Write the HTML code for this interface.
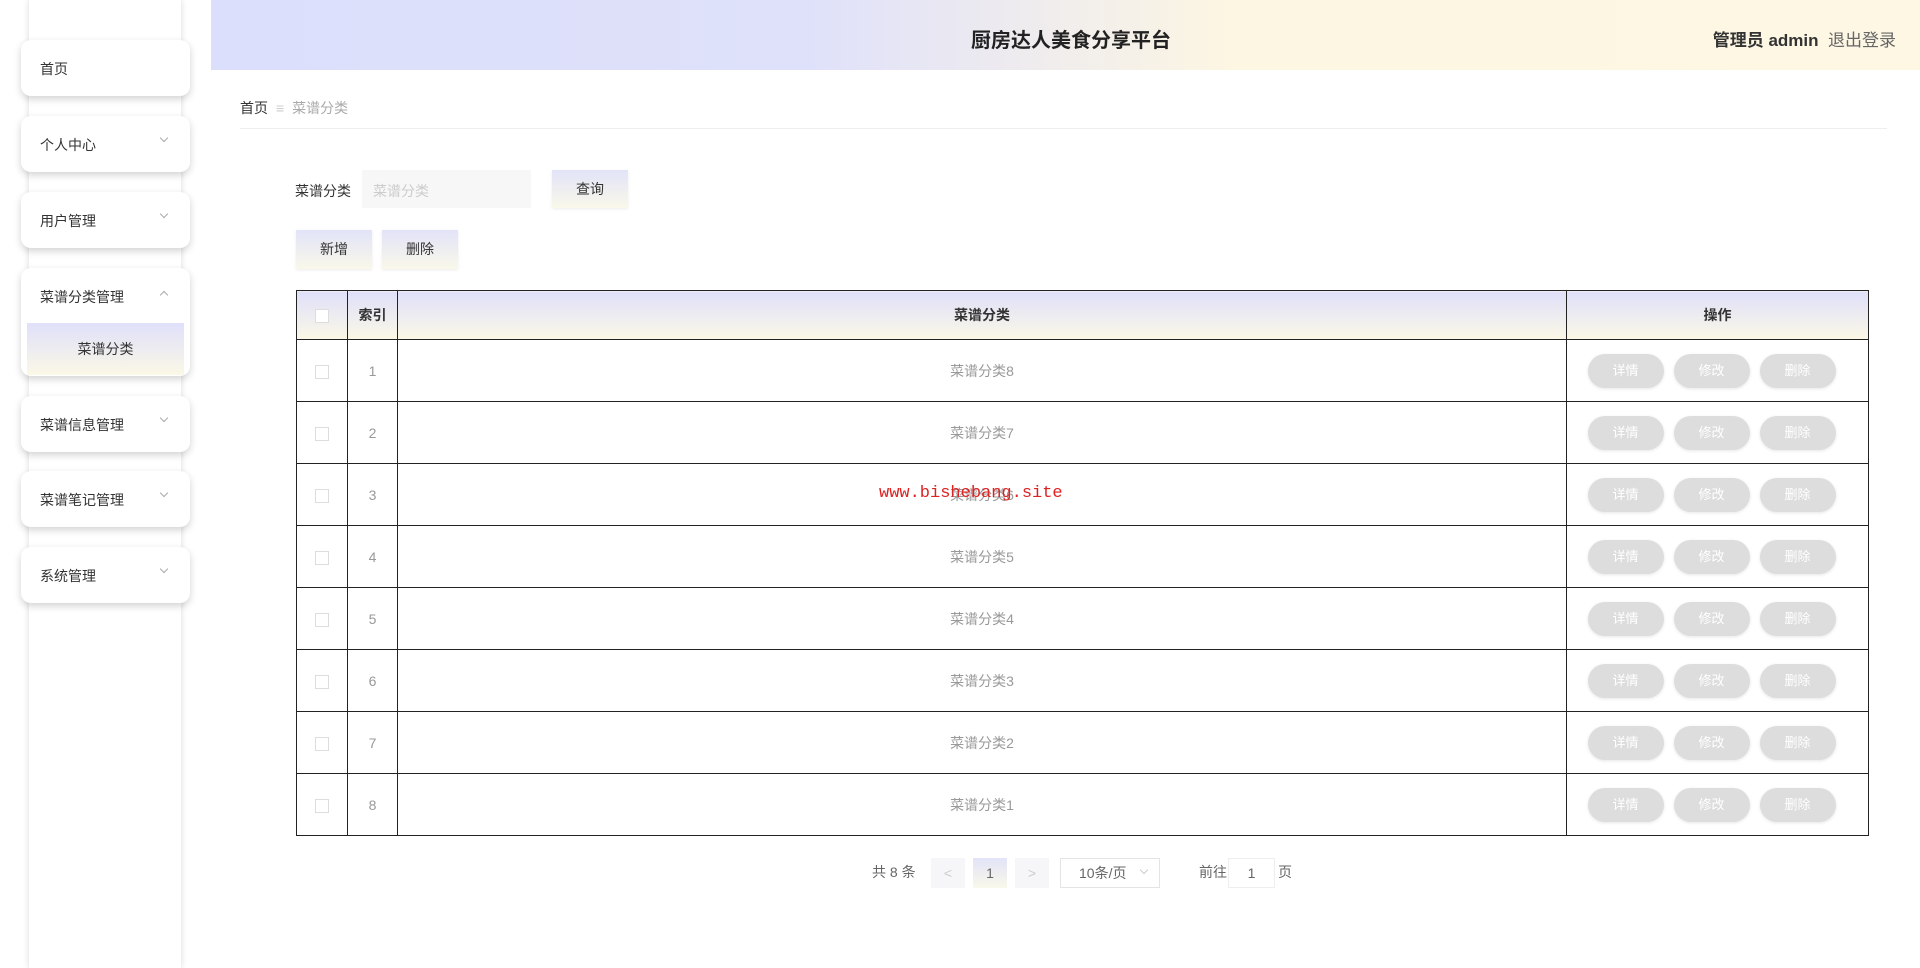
<!DOCTYPE html>
<html><head><meta charset="utf-8"><style>
*{margin:0;padding:0;box-sizing:border-box}
body{width:1920px;height:968px;overflow:hidden;background:#fff;font-family:"Liberation Sans","Noto Sans CJK SC",sans-serif;color:#333;position:relative}
.strip{position:absolute;left:29px;top:0;width:152px;height:968px;background:#fff;box-shadow:0 0 6px rgba(0,0,0,.15)}
.card{position:absolute;left:21px;width:169px;height:56px;background:#fff;border-radius:10px;box-shadow:0 3px 8px rgba(0,0,0,.18);font-size:14px;color:#333}
.card span{position:absolute;left:19px;top:19px}
.card i{position:absolute;right:23px;top:19px;width:6px;height:6px;border-right:1px solid #aaa;border-bottom:1px solid #aaa;transform:rotate(45deg)}
.card i.up{transform:rotate(-135deg);top:24px}
.sub{position:absolute;left:6px;top:55px;width:157px;height:52px;background:linear-gradient(#dfe0fa,#fbf8e6);text-align:center;line-height:52px;font-size:14px}
.header{position:absolute;left:211px;top:0;width:1709px;height:70px;background:linear-gradient(90deg,#dbdffb 0%,#dfe1fa 35%,#fdf6e2 60%,#fdf7e4 100%)}
.title{position:absolute;left:0;width:1720px;top:24px;text-align:center;font-size:20px;font-weight:bold;color:#222}
.user{position:absolute;right:24px;top:26px;font-size:17px}
.gbtn{position:absolute;background:linear-gradient(#e2e3f8,#f9f8ea);font-size:14px;text-align:center;color:#333;box-shadow:0 1px 3px rgba(0,0,0,.08)}
table{position:absolute;left:296px;top:290px;width:1573px;border-collapse:collapse;font-size:14px}
td,th{border:1.5px solid #222;text-align:center;height:62px;color:#999;font-weight:normal}
th{height:49px;background:linear-gradient(#dfe0fa,#fbf8e6);color:#333;font-weight:bold}
td.op{padding-right:12px}
.cb{display:inline-block;width:14px;height:14px;border:1px solid #ddd;background:#fff;vertical-align:middle}
.ab{display:inline-block;width:76px;height:34px;border-radius:17px;background:#ddd;color:#fff;line-height:34px;margin:0 5px;font-size:13px;box-shadow:0 1px 3px rgba(0,0,0,.1)}
.pg{position:absolute;top:858px;font-size:14px;color:#666}
</style></head><body>
<div class="strip"></div>
<div class="card" style="top:40px"><span>首页</span></div>
<div class="card" style="top:116px"><span>个人中心</span><i></i></div>
<div class="card" style="top:192px"><span>用户管理</span><i></i></div>
<div class="card" style="top:268px;height:108px"><span>菜谱分类管理</span><i class="up"></i><div class="sub">菜谱分类</div></div>
<div class="card" style="top:396px"><span>菜谱信息管理</span><i></i></div>
<div class="card" style="top:471px"><span>菜谱笔记管理</span><i></i></div>
<div class="card" style="top:547px"><span>系统管理</span><i></i></div>

<div class="header"><div class="title">厨房达人美食分享平台</div><div class="user"><b>管理员 admin</b>&nbsp;&nbsp;<span style="color:#666">退出登录</span></div></div>

<div style="position:absolute;left:240px;top:98px;font-size:14px"><span>首页</span><span style="color:#ccc;margin:0 8px">&#8801;</span><span style="color:#aaa">菜谱分类</span></div>
<div style="position:absolute;left:240px;top:128px;width:1647px;height:1px;background:#eee"></div>

<div style="position:absolute;left:295px;top:181px;font-size:14px">菜谱分类</div>
<div style="position:absolute;left:362px;top:170px;width:169px;height:38px;background:#f7f7f8;font-size:14px;color:#ccc;padding:11px 11px">菜谱分类</div>
<div class="gbtn" style="left:552px;top:170px;width:76px;height:38px;line-height:38px">查询</div>
<div class="gbtn" style="left:296px;top:230px;width:76px;height:39px;line-height:39px">新增</div>
<div class="gbtn" style="left:382px;top:230px;width:76px;height:39px;line-height:39px">删除</div>

<table>
<tr><th style="width:51px"><span class="cb"></span></th><th style="width:50px">索引</th><th>菜谱分类</th><th style="width:302px">操作</th></tr>
<tr><td><span class="cb"></span></td><td>1</td><td>菜谱分类8</td><td class="op"><span class="ab">详情</span><span class="ab">修改</span><span class="ab">删除</span></td></tr>
<tr><td><span class="cb"></span></td><td>2</td><td>菜谱分类7</td><td class="op"><span class="ab">详情</span><span class="ab">修改</span><span class="ab">删除</span></td></tr>
<tr><td><span class="cb"></span></td><td>3</td><td>菜谱分类6</td><td class="op"><span class="ab">详情</span><span class="ab">修改</span><span class="ab">删除</span></td></tr>
<tr><td><span class="cb"></span></td><td>4</td><td>菜谱分类5</td><td class="op"><span class="ab">详情</span><span class="ab">修改</span><span class="ab">删除</span></td></tr>
<tr><td><span class="cb"></span></td><td>5</td><td>菜谱分类4</td><td class="op"><span class="ab">详情</span><span class="ab">修改</span><span class="ab">删除</span></td></tr>
<tr><td><span class="cb"></span></td><td>6</td><td>菜谱分类3</td><td class="op"><span class="ab">详情</span><span class="ab">修改</span><span class="ab">删除</span></td></tr>
<tr><td><span class="cb"></span></td><td>7</td><td>菜谱分类2</td><td class="op"><span class="ab">详情</span><span class="ab">修改</span><span class="ab">删除</span></td></tr>
<tr><td><span class="cb"></span></td><td>8</td><td>菜谱分类1</td><td class="op"><span class="ab">详情</span><span class="ab">修改</span><span class="ab">删除</span></td></tr>
</table>
<div style="position:absolute;left:879px;top:484px;font-family:'Liberation Mono',monospace;font-size:17px;color:#d22">www.bishebang.site</div>

<div class="pg" style="left:872px;top:862px">共 8 条</div>
<div class="pg" style="left:931px;width:34px;height:30px;background:#f6f6f8;text-align:center;line-height:30px;color:#ccc">&lt;</div>
<div class="pg" style="left:973px;width:34px;height:30px;background:linear-gradient(#e2e3f8,#f9f8ea);text-align:center;line-height:30px">1</div>
<div class="pg" style="left:1015px;width:34px;height:30px;background:#f6f6f8;text-align:center;line-height:30px;color:#ccc">&gt;</div>
<div class="pg" style="left:1060px;width:100px;height:30px;border:1px solid #e4e4e4;line-height:28px;padding-left:18px">10条/页<span style="position:absolute;right:12px;top:8px;width:6px;height:6px;border-right:1px solid #ccc;border-bottom:1px solid #ccc;transform:rotate(45deg)"></span></div>
<div class="pg" style="left:1199px;top:862px">前往</div>
<div class="pg" style="left:1228px;width:47px;height:30px;border:1px solid #eee;text-align:center;line-height:28px">1</div>
<div class="pg" style="left:1278px;top:862px">页</div>
</body></html>
